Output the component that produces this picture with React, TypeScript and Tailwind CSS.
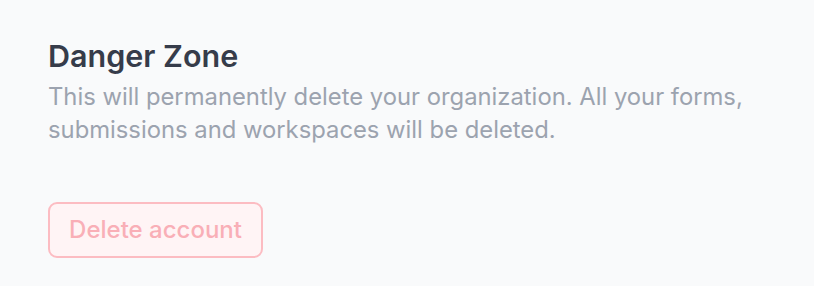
export default function App() {
  return (
    <div className="min-h-[286px] w-[814px] bg-[#f9fafb] px-12 pt-[38px]" style={{ fontFamily: "Inter, 'Noto Sans', sans-serif" }}>
      <h2 className="text-[30.5px] font-semibold leading-[36px] text-[#363c4a]">Danger Zone</h2>
      <p className="mt-[6px] text-[23.8px] leading-[33px] text-[#9ca3af]">
        This will permanently delete your organization. All your forms,
        <br />
        submissions and workspaces will be deleted.
      </p>
      <button className="mt-[56px] flex h-[56px] w-[215px] items-center justify-center rounded-[9px] border-2 border-[#fcbcc2] bg-[#fff4f5] text-[24px] font-medium text-[#f9afb7]">
        Delete account
      </button>
    </div>
  );
}
